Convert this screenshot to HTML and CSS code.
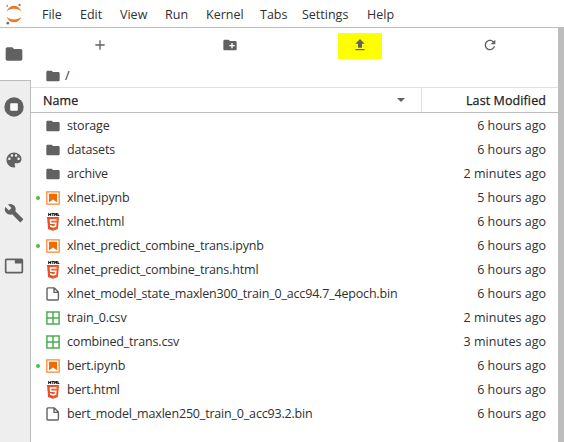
FILE: index.html
```html
<!DOCTYPE html>
<html lang="en">
<head>
<meta charset="utf-8">
<title>JupyterLab</title>
<link rel="stylesheet" href="styles.css">
</head>
<body>
<svg class="defs" aria-hidden="true">
  <symbol id="folder" viewBox="0 0 24 24"><path d="M10 4H4c-1.1 0-1.99.9-1.99 2L2 18c0 1.1.9 2 2 2h16c1.1 0 2-.9 2-2V8c0-1.1-.9-2-2-2h-8l-2-2z"/></symbol>
  <symbol id="notebook" viewBox="0 0 14 14"><path fill="none" stroke="#f58a3c" stroke-width="1.3" d="M.8.8h12.4v12.4H.8z"/><path fill="#ef6c00" d="M3 2.7h8v8.6L7 8.4l-4 2.9z"/></symbol>
  <symbol id="html" viewBox="0 0 14 18"><path fill="#111" d="M2.2 0h1v1h1V0h1v3h-1V2h-1v1h-1zM5.6 0h2.3v1h-.6v2h-1V1h-.7zM8.2 0h1l.5.8.5-.8h1v3h-1V1.6l-.5.7-.5-.7V3h-1zM11.5 0h.9v2h.9v1h-1.8z"/><path fill="#e44d26" d="M1 4h12l-1.1 12L7 17.7 2.1 16z"/><path fill="#f16529" d="M7 5h4.9l-1 10.3L7 16.6z"/><path fill="none" stroke="#fff" stroke-width="1.5" d="M10.5 7H4.4l.3 3.2h5.1l-.4 3L7 14l-2.3-.8-.1-1.2"/></symbol>
  <symbol id="file" viewBox="0 0 14 14"><path fill="none" stroke="#616161" stroke-width="1.4" stroke-linejoin="round" d="M2 .9h6.3l4.1 4.2V12q0 1-1 1H2q-1 0-1-1V1.900q0-1 1-1zM8 1v4.400h4.300"/></symbol>
  <symbol id="sheet" viewBox="0 0 14 14"><path fill="none" stroke="#4caf50" stroke-width="1.5" d="M.9.9h12.200v12.200H.9zM7 1v12M1 7h12"/></symbol>
</svg>
<header class="menubar">
  <svg class="logo" width="18" height="22" viewBox="0 0 18 22"><path fill="#f37726" d="M1.500 8.500C4.500.8 13.500.8 16.500 8.500 12.500 4.800 5.500 4.800 1.500 8.500zM1.500 13.800C5.500 17.400 12.500 17.400 16.500 13.800 13.500 21.200 4.500 21.200 1.500 13.800z"/><circle cx="14.600" cy="1.900" r="1.100" fill="#767677"/><circle cx="2.200" cy="2.900" r=".8" fill="#767677"/><circle cx="2.800" cy="20.200" r="1.400" fill="#767677"/></svg>
  <nav class="menus"><span>File</span><span>Edit</span><span>View</span><span>Run</span><span>Kernel</span><span>Tabs</span><span>Settings</span><span>Help</span></nav>
</header>
<main class="workspace">
  <aside class="sidebar">
    <div class="tab active"><svg width="20" height="20"><use href="#folder"/></svg></div>
    <div class="tab"><svg width="20" height="20" viewBox="0 0 20 20"><circle cx="10" cy="10" r="9.700"/><rect x="6.200" y="6.200" width="7.600" height="7.600" rx=".8" fill="#fff"/></svg></div>
    <div class="tab"><svg width="20" height="20" viewBox="0 0 24 24"><path d="M12 3c-4.970 0-9 4.030-9 9s4.030 9 9 9c.83 0 1.500-.67 1.500-1.500 0-.39-.15-.74-.39-1.010-.23-.26-.38-.61-.38-.99 0-.83.67-1.500 1.500-1.500H16c2.760 0 5-2.240 5-5 0-4.420-4.030-8-9-8zm-5.500 9c-.83 0-1.500-.67-1.500-1.500S5.670 9 6.500 9 8 9.670 8 10.500 7.330 12 6.500 12zm3-4C8.670 8 8 7.330 8 6.500S8.670 5 9.500 5s1.500.67 1.500 1.500S10.330 8 9.500 8zm5 0c-.83 0-1.500-.67-1.500-1.500S13.670 5 14.500 5s1.500.67 1.500 1.500S15.330 8 14.500 8zm3 4c-.83 0-1.500-.67-1.500-1.500S16.670 9 17.500 9s1.500.67 1.500 1.500-.67 1.500-1.500 1.500z"/></svg></div>
    <div class="tab"><svg width="20" height="20" viewBox="0 0 24 24"><path d="M22.700 19l-9.100-9.100c.9-2.300.4-5-1.500-6.900-2-2-5-2.400-7.400-1.300L9 6 6 9 1.600 4.700C.4 7.100.9 10.100 2.900 12.100c1.900 1.900 4.600 2.400 6.900 1.500l9.100 9.100c.4.4 1 .4 1.400 0l2.300-2.300c.5-.4.5-1.100.1-1.400z"/></svg></div>
    <div class="tab"><svg width="20" height="20" viewBox="0 0 24 24"><path d="M21 3H3c-1.100 0-2 .9-2 2v14c0 1.100.9 2 2 2h18c1.100 0 2-.9 2-2V5c0-1.100-.9-2-2-2zm0 16H3V5h10v4h8v10z"/></svg></div>
  </aside>
  <section class="browser">
    <div class="toolbar">
      <button><svg width="16" height="16" viewBox="0 0 24 24"><path d="M19 13h-6v6h-2v-6H5v-2h6V5h2v6h6v2z"/></svg></button>
      <button><svg width="16" height="16" viewBox="0 0 24 24"><path d="M20 6h-8l-2-2H4c-1.110 0-1.990.89-1.990 2L2 18c0 1.110.89 2 2 2h16c1.110 0 2-.89 2-2V8c0-1.110-.89-2-2-2zm-1 8h-3v3h-2v-3h-3v-2h3V9h2v3h3v2z"/></svg></button>
      <button class="upload"><svg width="16" height="16" viewBox="0 0 24 24"><path d="M9 16h6v-6h4l-7-7-7 7h4zm-4 2h14v2H5z"/></svg></button>
      <button><svg width="16" height="16" viewBox="0 0 24 24"><path d="M17.650 6.350C16.200 4.900 14.210 4 12 4c-4.420 0-7.990 3.580-7.990 8s3.570 8 7.990 8c3.730 0 6.840-2.550 7.730-6h-2.080c-.82 2.330-3.040 4-5.650 4-3.310 0-6-2.690-6-6s2.690-6 6-6c1.660 0 3.140.69 4.220 1.780L13 11h7V4l-2.350 2.350z"/></svg></button>
    </div>
    <div class="crumbs"><svg width="16" height="16"><use href="#folder"/></svg><span>/</span></div>
    <div class="listhead"><div class="hname"><span>Name</span><i class="caret"></i></div><div class="hmod">Last Modified</div></div>
    <ul class="files">
      <li><b></b><svg class="ic"><use href="#folder"/></svg><span class="name">storage</span><time>6 hours ago</time></li>
      <li><b></b><svg class="ic"><use href="#folder"/></svg><span class="name">datasets</span><time>6 hours ago</time></li>
      <li><b></b><svg class="ic"><use href="#folder"/></svg><span class="name">archive</span><time>2 minutes ago</time></li>
      <li class="running"><b></b><svg class="ic type"><use href="#notebook"/></svg><span class="name">xlnet.ipynb</span><time>5 hours ago</time></li>
      <li><b></b><svg class="ic web"><use href="#html"/></svg><span class="name">xlnet.html</span><time>6 hours ago</time></li>
      <li class="running"><b></b><svg class="ic type"><use href="#notebook"/></svg><span class="name">xlnet_predict_combine_trans.ipynb</span><time>6 hours ago</time></li>
      <li><b></b><svg class="ic web"><use href="#html"/></svg><span class="name">xlnet_predict_combine_trans.html</span><time>6 hours ago</time></li>
      <li><b></b><svg class="ic type"><use href="#file"/></svg><span class="name">xlnet_model_state_maxlen300_train_0_acc94.7_4epoch.bin</span><time>6 hours ago</time></li>
      <li><b></b><svg class="ic type"><use href="#sheet"/></svg><span class="name">train_0.csv</span><time>2 minutes ago</time></li>
      <li><b></b><svg class="ic type"><use href="#sheet"/></svg><span class="name">combined_trans.csv</span><time>3 minutes ago</time></li>
      <li class="running"><b></b><svg class="ic type"><use href="#notebook"/></svg><span class="name">bert.ipynb</span><time>6 hours ago</time></li>
      <li><b></b><svg class="ic web"><use href="#html"/></svg><span class="name">bert.html</span><time>6 hours ago</time></li>
      <li><b></b><svg class="ic type"><use href="#file"/></svg><span class="name">bert_model_maxlen250_train_0_acc93.2.bin</span><time>6 hours ago</time></li>
    </ul>
  </section>
  <div class="edge"></div>
</main>
</body>
</html>
```
FILE: styles.css
```css
* { box-sizing: border-box; }
body {
  margin: 0;
  width: 564px;
  height: 442px;
  overflow: hidden;
  display: flex;
  flex-direction: column;
  background: #fff;
  color: #303030;
  font: 12.5px/24px "Open Sans", "Noto Sans", sans-serif;
}
svg { display: block; fill: #616161; flex: none; }
.defs { display: none; }
.menubar { display: flex; height: 28px; border-bottom: 1px solid #bdbdbd; }
.logo { margin: 3px 19px 0 5px; }
.menus {
  display: grid;
  grid-template-columns: 38px 40px 45px 41px 54px 42px 65px 40px;
  line-height: 29px;
  white-space: nowrap;
}
.workspace { flex: 1; display: flex; min-height: 0; }
.sidebar { width: 31px; flex: none; background: #eee; border-right: 1px solid #bdbdbd; }
.tab { height: 53px; padding: 0 2px 1px 0; display: flex; align-items: center; justify-content: center; }
.tab.active { width: 31px; padding: 0 3px 0 0; background: #fff; border-bottom: 1px solid #bdbdbd; }
.browser { width: 527px; flex: none; }
.edge { flex: 1; background: #bdbdbd; }
.toolbar { height: 36px; padding: 5px 3px 0 4px; display: grid; grid-template-columns: repeat(4, 130px); justify-items: center; }
.toolbar button { width: 44px; height: 26px; padding: 0 0 2px; border: 0; background: none; display: flex; align-items: center; justify-content: center; }
.toolbar .upload { background: #ff0; }
.crumbs { height: 23px; padding-left: 14px; display: flex; align-items: center; gap: 4px; }
.listhead { height: 26px; display: flex; border-top: 1px solid #e0e0e0; border-bottom: 1px solid #bdbdbd; color: #212121; -webkit-text-stroke: .25px #212121; letter-spacing: .1px; line-height: 25px; }
.hname { width: 391px; padding: 0 16px 0 12px; display: flex; align-items: center; justify-content: space-between; border-right: 1px solid #e0e0e0; }
.hmod { flex: 1; padding-right: 12px; text-align: right; }
.caret { border: 4px solid transparent; border-top-color: #616161; border-bottom: 0; }
.files { margin: 0; padding: 1px 0 0; list-style: none; }
.files li { height: 24px; padding: 0 12px 0 5px; display: flex; align-items: center; white-space: nowrap; }
.files b { width: 4px; height: 4px; border-radius: 50%; margin-right: 5px; }
.running b { background: #45c145; }
.ic { width: 16px; height: 16px; margin-right: 6px; }
.type { width: 14px; height: 14px; margin: 0 7px 0 1px; }
.web { width: 14px; height: 18px; margin: 0 7px 0 1px; }
.name { flex: 1; letter-spacing: -.18px; }
```
